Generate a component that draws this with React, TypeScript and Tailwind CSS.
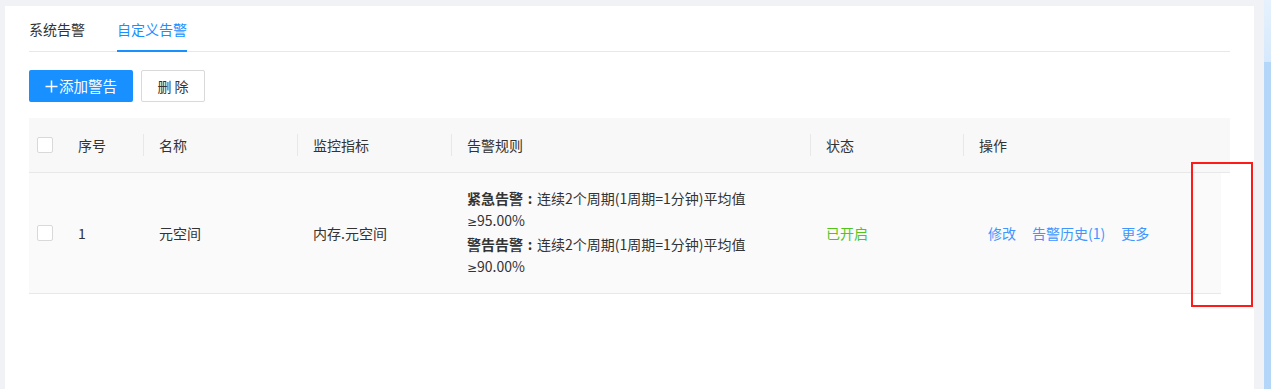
import React from 'react';

const font = { fontFamily: '"Noto Sans CJK SC", "Noto Sans", sans-serif' };

interface Rule {
  label: string;
  text: string;
  threshold: string;
}

const rules: Rule[] = [
  { label: '紧急告警', text: '连续2个周期(1周期=1分钟)平均值', threshold: '95.00%' },
  { label: '警告告警', text: '连续2个周期(1周期=1分钟)平均值', threshold: '90.00%' },
];

function Checkbox() {
  return <span className="block w-4 h-4 rounded-[2px] border border-[#d9d9d9] bg-white" />;
}

function HeadCell({ children, sep = true, className = '' }: { children: React.ReactNode; sep?: boolean; className?: string }) {
  return (
    <div className={`relative flex items-center pl-4 ${className}`}>
      {sep && <span className="absolute left-0 top-[16px] h-[22px] w-px bg-[#e8e8e8]" />}
      {children}
    </div>
  );
}

export default function App() {
  return (
    <div className="relative flex h-[389px] w-[1271px] bg-[#f0f2f5] text-[14px] text-[#333]" style={font}>
      {/* main panel */}
      <div className="ml-[5px] mt-[6px] h-[383px] w-[1249px] bg-white px-6">
        {/* tabs */}
        <div className="flex h-[46px] gap-8 border-b border-[#e8e8e8]">
          <div className="flex items-center leading-[22px] pt-px">系统告警</div>
          <div className="flex items-center leading-[22px] pt-px text-[#1890ff] border-b-2 border-[#1890ff] mb-[-1px]">
            自定义告警
          </div>
        </div>

        {/* actions */}
        <div className="mt-[18px] flex gap-2">
          <button className="flex h-8 w-[104px] items-center justify-center gap-[1px] rounded-[2px] bg-[#1890ff] text-[14.5px] text-white">
            <svg width="13" height="13" viewBox="0 0 13 13" fill="none" stroke="white" strokeWidth="1.5">
              <path d="M6.5 0.5v12M0.5 6.5h12" />
            </svg>
            <span>添加警告</span>
          </button>
          <button className="h-8 w-16 rounded-[2px] border border-[#d9d9d9] bg-white text-[#333]">删 除</button>
        </div>

        {/* table */}
        <div className="mt-4">
          <div className="flex h-[55px] border-b border-[#e8e8e8] bg-[#f8f8f8]">
            <div className="flex w-[33px] items-center pl-2">
              <Checkbox />
            </div>
            <HeadCell sep={false} className="w-[81px]">序号</HeadCell>
            <HeadCell className="w-[154px]">名称</HeadCell>
            <HeadCell className="w-[154px]">监控指标</HeadCell>
            <HeadCell className="w-[359px]">告警规则</HeadCell>
            <HeadCell className="w-[153px]">状态</HeadCell>
            <HeadCell className="flex-1">操作</HeadCell>
          </div>

          <div className="flex h-[121px] w-[1192px] border-b border-[#e8e8e8] bg-[#fafafa]">
            <div className="flex w-[33px] items-center pl-2">
              <Checkbox />
            </div>
            <div className="flex w-[81px] items-center pl-4">1</div>
            <div className="flex w-[154px] items-center pl-4">元空间</div>
            <div className="flex w-[154px] items-center pl-4">内存.元空间</div>
            <div className="flex w-[359px] flex-col justify-center pl-4 leading-[22px]">
              {rules.map((r) => (
                <div key={r.label}>
                  <div className="whitespace-nowrap">
                    <span className="font-bold">{r.label}</span>
                    <span className="inline-block w-[14px] text-center font-bold">:</span>
                    {r.text}
                  </div>
                  <div>
                    <span style={{ fontFamily: '"DejaVu Sans", sans-serif' }} className="text-[12px]">≥</span>
                    {r.threshold}
                  </div>
                </div>
              ))}
            </div>
            <div className="flex w-[153px] items-center pl-4 text-[#52c41a]">已开启</div>
            <div className="flex flex-1 items-center gap-4 pl-[25px] text-[#4096ff]">
              <span>修改</span>
              <span>告警历史(1)</span>
              <span>更多</span>
            </div>
          </div>
        </div>
      </div>

      {/* right scrollbar strip */}
      <div className="ml-[10px] flex w-[7px] flex-col">
        <div className="h-[62px] bg-gradient-to-b from-[#e6f1fd] to-[#d6e9fc]" />
        <div className="flex-1 bg-[#b3d6f9]" />
      </div>

      {/* annotation box */}
      <div className="absolute left-[1191px] top-[162px] h-[145px] w-[62px] border-2 border-[#ff1a1a]" />
    </div>
  );
}
